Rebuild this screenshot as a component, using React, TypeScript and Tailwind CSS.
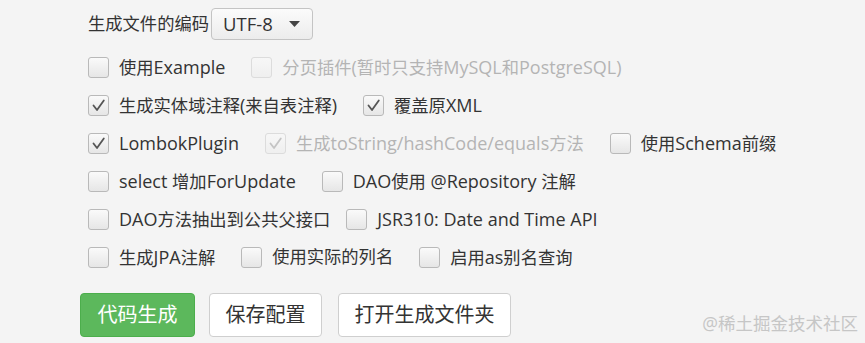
import React from "react";

const FONT = { fontFamily: '"Open Sans", "Noto Sans CJK SC", sans-serif' };

// latin runs are set a little larger so they match the YaHei/Segoe widths of the original
function Mixed({ text }: { text: string }) {
  const parts = text.split(/([\u4e00-\u9fff]+)/).filter(Boolean);
  return (
    <>
      {parts.map((p, i) =>
        /[\u4e00-\u9fff]/.test(p) ? (
          <span key={i}>{p}</span>
        ) : (
          <span key={i} className="text-[18px]">
            {p}
          </span>
        )
      )}
    </>
  );
}

function Box({ checked, disabled }: { checked?: boolean; disabled?: boolean }) {
  return (
    <span
      className={
        "flex h-[21px] w-[21px] shrink-0 items-center justify-center rounded-[3px] border " +
        (disabled
          ? "border-[#dcdcdc] bg-gradient-to-b from-[#f7f7f7] to-[#efefef]"
          : "border-[#b9b9b9] bg-gradient-to-b from-[#fafafa] to-[#e6e6e6]")
      }
    >
      {checked && (
        <svg width="15" height="15" viewBox="0 0 15 15">
          <path
            d="M2.5 7.5 L6 12 L12.8 2.5"
            fill="none"
            stroke={disabled ? "#c4c4c4" : "#555"}
            strokeWidth="1.8"
            strokeLinecap="round"
            strokeLinejoin="round"
          />
        </svg>
      )}
    </span>
  );
}

function Check({ label, checked, disabled }: { label: string; checked?: boolean; disabled?: boolean }) {
  return (
    <label className="flex items-center gap-[10px]">
      <Box checked={checked} disabled={disabled} />
      <span className={"whitespace-nowrap text-[17.3px] leading-none " + (disabled ? "text-[#b4b4b4]" : "text-[#333]")}>
        <Mixed text={label} />
      </span>
    </label>
  );
}

function Row({ children, tight }: { children: React.ReactNode; tight?: boolean }) {
  return <div className={"flex h-[38px] items-center " + (tight ? "gap-[16px]" : "gap-[26px]")}>{children}</div>;
}

export default function App() {
  return (
    <div className="relative h-[343px] w-[865px] overflow-hidden bg-[#f4f4f4]" style={FONT}>
      <div className="pl-[80px] pt-[8px]">
        <div className="flex h-[32px] items-center gap-[2px] pl-[8px]">
          <span className="text-[17.3px] text-[#333]">生成文件的编码</span>
          <div className="flex h-[32px] w-[102px] items-center justify-between rounded-[4px] border border-[#c4c4c4] bg-gradient-to-b from-[#fbfbfb] to-[#ececec] pl-[11px] pr-[12px]">
            <span className="text-[18.5px] text-[#333]">UTF-8</span>
            <svg width="11" height="7" viewBox="0 0 11 7">
              <path d="M0 0 H11 L5.5 6 Z" fill="#444" />
            </svg>
          </div>
        </div>
        <div className="mt-[8px] pl-[8px]">
          <Row>
            <Check label="使用Example" />
            <Check label="分页插件(暂时只支持MySQL和PostgreSQL)" disabled />
          </Row>
          <Row>
            <Check label="生成实体域注释(来自表注释)" checked />
            <Check label="覆盖原XML" checked />
          </Row>
          <Row>
            <Check label="LombokPlugin" checked />
            <Check label="生成toString/hashCode/equals方法" checked disabled />
            <Check label="使用Schema前缀" />
          </Row>
          <Row>
            <Check label="select 增加ForUpdate" />
            <Check label="DAO使用 @Repository 注解" />
          </Row>
          <Row tight>
            <Check label="DAO方法抽出到公共父接口" />
            <Check label="JSR310: Date and Time API" />
          </Row>
          <Row>
            <Check label="生成JPA注解" />
            <Check label="使用实际的列名" />
            <Check label="启用as别名查询" />
          </Row>
        </div>
        <div className="mt-[17px] flex gap-[14px]">
          <button className="h-[44px] w-[115px] rounded-[4px] border border-[#4cae4c] bg-[#5cb85c] text-[20px] text-white">
            代码生成
          </button>
          <button className="h-[44px] w-[113px] rounded-[4px] border border-[#cfcfcf] bg-white text-[20px] text-[#333]">
            保存配置
          </button>
          <button className="ml-[2px] h-[44px] w-[173px] rounded-[4px] border border-[#cfcfcf] bg-white text-[20px] text-[#333]">
            打开生成文件夹
          </button>
        </div>
      </div>
      <div className="absolute bottom-[7px] right-[7px] text-[17.5px] text-[#c6c6c6]">@稀土掘金技术社区</div>
    </div>
  );
}
